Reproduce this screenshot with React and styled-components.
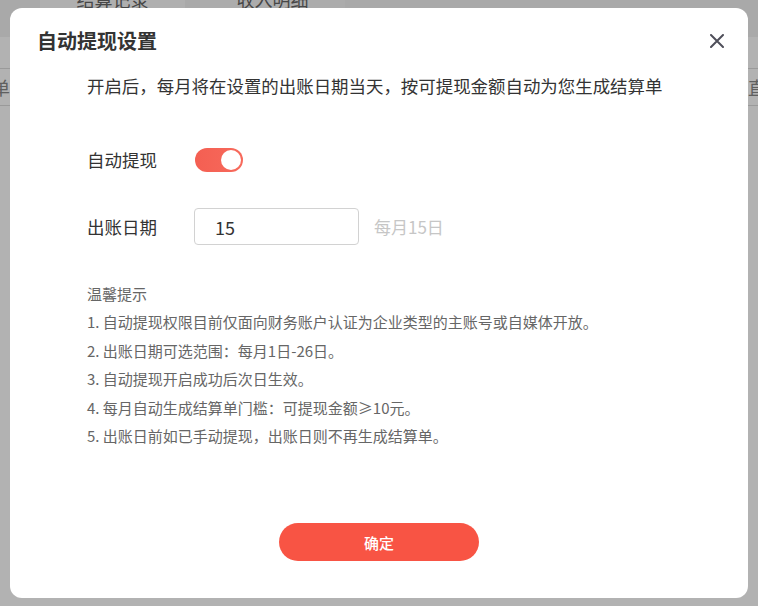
import React from "react";
import styled, { createGlobalStyle } from "styled-components";

const Global = createGlobalStyle`
  html, body { margin: 0; padding: 0; }
  body {
    width: 758px; height: 606px; overflow: hidden;
    font-family: "Noto Sans CJK SC", "Noto Sans", sans-serif;
    background: #f2f2f2;
  }
`;

const Page = styled.div`
  width: 758px;
  height: 606px;
  display: flex;
  flex-direction: column;
  background: #f2f2f2;
`;

const TabBar = styled.div`
  height: 37px;
  display: flex;
  align-items: flex-start;
  padding-left: 40px;
  gap: 15px;
`;

const Tab = styled.div`
  width: 145px;
  height: 37px;
  background: ${(p) => (p.$active ? "#fbfbfb" : "#f7f7f7")};
  color: #666;
  font-size: 18px;
  line-height: 18px;
  text-align: center;
  margin-top: -10px;
`;

const PageBody = styled.div`
  flex: 1;
  background: #fff;
  padding-top: 31px;
`;

const TableHead = styled.div`
  height: 36px;
  border-top: 1px solid #ddd;
  border-bottom: 1px solid #ddd;
  display: flex;
  justify-content: space-between;
  align-items: center;
  font-size: 18px;
  color: #888;
  margin: 0 -8px;
`;

const Overlay = styled.div`
  position: fixed;
  inset: 0;
  background: rgba(0, 0, 0, 0.3);
  display: flex;
  align-items: center;
  justify-content: center;
`;

const Dialog = styled.div`
  width: 738px;
  height: 590px;
  box-sizing: border-box;
  background: #fff;
  border-radius: 12px;
  padding: 19px 24px 37px 27px;
  display: flex;
  flex-direction: column;
`;

const Header = styled.div`
  display: flex;
  justify-content: space-between;
  align-items: center;
  height: 28px;
`;

const Title = styled.h2`
  margin: 0;
  font-size: 20px;
  line-height: 28px;
  font-weight: 700;
  color: #333;
`;

const CloseBtn = styled.button`
  border: 0;
  background: none;
  padding: 0;
  width: 14px;
  height: 14px;
  cursor: pointer;
  display: flex;
`;

const Body = styled.div`
  padding-left: 50px;
  display: flex;
  flex-direction: column;
`;

const Intro = styled.p`
  margin: 17px 0 0;
  font-size: 17.45px;
  line-height: 28px;
  color: #333;
`;

const Row = styled.div`
  display: flex;
  align-items: center;
  margin-top: ${(p) => p.$mt}px;
  min-height: 28px;
`;

const Label = styled.span`
  width: 107px;
  font-size: 17.5px;
  line-height: 28px;
  color: #333;
`;

const Switch = styled.span`
  width: 48px;
  height: 24px;
  border-radius: 12px;
  background: linear-gradient(90deg, #f45f52, #f76a5c);
  display: flex;
  align-items: center;
  justify-content: flex-end;
  padding: 0 2px;
  box-sizing: border-box;
  margin-left: 1px;
`;

const Knob = styled.span`
  width: 20px;
  height: 20px;
  border-radius: 50%;
  background: #fff;
`;

const Input = styled.input`
  width: 165px;
  height: 37px;
  box-sizing: border-box;
  border: 1px solid #d2d2d2;
  border-radius: 4px;
  padding: 0 0 0 20px;
  font-family: inherit;
  font-size: 18px;
  color: #333;
  outline: none;
`;

const Hint = styled.span`
  margin-left: 15px;
  font-size: 17px;
  color: #c6c6c6;
`;

const Tips = styled.div`
  margin-top: 35px;
  font-size: 15px;
  line-height: 28.4px;
  color: #666;
`;

const TipLine = styled.div``;

const Footer = styled.div`
  margin-top: auto;
  margin-right: 3px;
  display: flex;
  justify-content: center;
`;

const Confirm = styled.button`
  width: 200px;
  height: 38px;
  border: 0;
  border-radius: 19px;
  background: #f85444;
  color: #fff;
  font-family: inherit;
  font-size: 15px;
  font-weight: 500;
  cursor: pointer;
`;

const tips = [
  "温馨提示",
  "1. 自动提现权限目前仅面向财务账户认证为企业类型的主账号或自媒体开放。",
  "2. 出账日期可选范围：每月1日-26日。",
  "3. 自动提现开启成功后次日生效。",
  "4. 每月自动生成结算单门槛：可提现金额≥10元。",
  "5. 出账日前如已手动提现，出账日则不再生成结算单。",
];

export default function App() {
  return (
    <>
      <Global />
      <Page>
        <TabBar>
          <Tab $active>结算记录</Tab>
          <Tab>收入明细</Tab>
        </TabBar>
        <PageBody>
          <TableHead>
            <span>单</span>
            <span>直</span>
          </TableHead>
        </PageBody>
      </Page>
      <Overlay>
        <Dialog>
          <Header>
            <Title>自动提现设置</Title>
            <CloseBtn aria-label="关闭">
              <svg width="14" height="14" viewBox="0 0 14 14">
                <path d="M1 1L13 13M13 1L1 13" stroke="#4f4f5a" strokeWidth="2" strokeLinecap="round" />
              </svg>
            </CloseBtn>
          </Header>
          <Body>
            <Intro>开启后，每月将在设置的出账日期当天，按可提现金额自动为您生成结算单</Intro>
            <Row $mt={46}>
              <Label>自动提现</Label>
              <Switch>
                <Knob />
              </Switch>
            </Row>
            <Row $mt={34}>
              <Label>出账日期</Label>
              <Input defaultValue="15" />
              <Hint>每月15日</Hint>
            </Row>
            <Tips>
              {tips.map((t) => (
                <TipLine key={t}>{t}</TipLine>
              ))}
            </Tips>
          </Body>
          <Footer>
            <Confirm>确定</Confirm>
          </Footer>
        </Dialog>
      </Overlay>
    </>
  );
}
